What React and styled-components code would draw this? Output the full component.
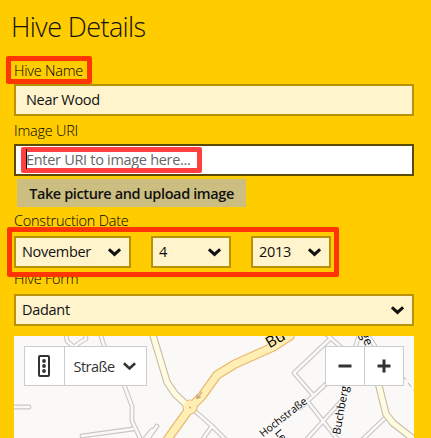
import React from "react";
import styled, { createGlobalStyle } from "styled-components";

const Global = createGlobalStyle`
  *{box-sizing:border-box}
  html,body{margin:0;background:#fc0;overflow:hidden}
`;
const Page = styled.main`
  position:relative;width:431px;height:438px;overflow:hidden;padding:0 17px 0 14px;
  background:#fc0;color:#111;font:350 14.5px "Open Sans","Noto Sans",sans-serif;
  display:flex;flex-direction:column;
`;
const Title = styled.h1`
  margin:9px 0 0 -3px;height:36px;font-size:27px;line-height:36px;font-weight:320;white-space:nowrap;
  letter-spacing:-0.6px;
`;
const Label = styled.label`
  display:block;flex:none;height:20px;line-height:20px;margin-top:${p => p.$top}px;font-size:14.5px;white-space:nowrap;
  color:#000;letter-spacing:-0.23px;
`;
const Field = styled.div`
  flex:none;height:32px;width:${p => p.$w || 400}px;margin-top:${p => p.$top || 0}px;
  padding:0 8px 0 ${p => p.$pl || 6}px;border:2px solid ${p => (p.$active ? "#5c4a08" : "#b8930a")};
  background:${p => (p.$active ? "#fff" : "#fff4cc")};color:${p => (p.$active ? "#666" : "#111")};
  display:flex;align-items:center;justify-content:space-between;font-size:14.5px;line-height:20px;font-weight:400;
  letter-spacing:-0.3px;white-space:nowrap;
`;
const DateRow = styled.div`display:flex;flex:none;gap:20px;margin-top:5px;`;
const Upload = styled.button`
  flex:none;margin:3px 0 0 3px;width:229px;height:28px;border:0;padding:1px 0 0;background:#ccbe80;color:#111;
  font:600 14.5px/27px "Open Sans","Noto Sans",sans-serif;letter-spacing:-0.39px;white-space:nowrap;
`;
const Highlight = styled.div`
  position:absolute;left:${p => p.$x}px;top:${p => p.$y}px;width:${p => p.$w}px;height:${p => p.$h}px;
  border:5px solid ${p => p.$c || "#ff3503"};border-radius:2px;
`;
const Caret = styled.i`
  position:absolute;left:26px;top:149px;width:1px;height:20px;background:#000;
`;
const MapBox = styled.section`
  position:relative;flex:none;width:400px;height:102px;margin-top:10px;padding:10px;background:#faf9f8;
  display:flex;justify-content:space-between;align-items:flex-start;overflow:hidden;
`;
const MapArt = styled.svg`position:absolute;inset:0;`;
const Group = styled.div`
  position:relative;display:flex;height:40px;border:1px solid #ccc;background:#fff;
`;
const Tool = styled.div`
  width:${p => p.$w}px;padding-right:${p => p.$pr || 0}px;
  display:flex;align-items:center;justify-content:center;gap:9px;color:#333;
  font-size:14.5px;font-weight:400;letter-spacing:-0.55px;& + &{border-left:1px solid #ccc}
`;
const MapText = styled.text`
  font:400 ${p => p.$size}px "Open Sans","Noto Sans",sans-serif;fill:#000;
  stroke:${p => p.$halo || "#faf9f8"};stroke-width:2px;paint-order:stroke;
`;

const Chevron = ({ s = 3 }) => (
  <svg width="13" height="10" viewBox="0 0 13 10"><path d="M.9 2.3 6.5 7.4 12.1 2.3" fill="none" stroke="currentColor" strokeWidth={s} /></svg>
);

const streets = [
  "M66 333 67 341 74 347 79 343 86 339 85 333",
  "M100 333 108 358 124 385 132 406 132 421 141 440",
  "M10 407H29",
  "M82 436 133 429",
  "M144 440 152 430",
  "M147 440 157 426",
  "M196 412 212 426 226 440M212 426 202 440",
  "M331 338 294 373 313 395M325 333 343 349",
  "M300 408 326 384M308 402 338 440",
  "M306 440 344 398",
  "M355 348 360 333M366 333 375 346",
  "M385 418 362 440",
];
const main = "M290 336 273 347 235 364 217 375 202 396 190 408 167 440";
const creams = ["M152 332 167 382 175 394 188 406", "M376 370 379 386 386 414 393 423 416 441"];

export default function App() {
  return (
    <Page>
      <Global />
      <Title>Hive Details</Title>
      <Label $top={16}>Hive Name</Label>
      <Field $top={3} $pl={10}>Near Wood</Field>
      <Label $top={5}>Image URI</Label>
      <Field $top={3} $pl={10} $active>Enter URI to image here...</Field>
      <Upload>Take picture and upload image</Upload>
      <Label $top={4}>Construction Date</Label>
      <DateRow>
        <Field $w={117}>November<Chevron /></Field>
        <Field $w={80}>4<Chevron /></Field>
        <Field $w={80}>2013<Chevron /></Field>
      </DateRow>
      <Label $top={1}>Hive Form</Label>
      <Field $top={5}>Dadant<Chevron /></Field>
      <MapBox>
        <MapArt width="400" height="102" viewBox="14 336 400 102" fill="none" strokeLinejoin="round" strokeLinecap="round">
          {streets.map(d => <path key={d} d={d} stroke="#c9c6c4" strokeWidth="4.8" />)}
          {streets.map(d => <path key={d} d={d} stroke="#faf9f8" strokeWidth="2.6" />)}
          {creams.map(d => <path key={d} d={d} stroke="#c5bba8" strokeWidth="7.5" />)}
          <path d={main} stroke="#e9b86f" strokeWidth="9.5" />
          <circle cx="190" cy="407" r="7" fill="#ffefb5" stroke="#e9b86f" strokeWidth="1.2" />
          {creams.map(d => <path key={d} d={d} stroke="#fffbe0" strokeWidth="5.3" />)}
          <path d={main} stroke="#ffefb5" strokeWidth="7" />
          <circle cx="190" cy="407" r="6.4" fill="#ffefb5" />
          <circle cx="190" cy="407.500" r="1" fill="#d9a566" />
          <path d="M202 392 197.500 398M197 394.500V398.500L200.500 397" stroke="#c29a72" strokeWidth="1.1" />
          <path d="M403 376 418 396" stroke="#aaa" strokeDasharray="4 5" />
          <MapText $size={15.5} $halo="#ffefb5" transform="translate(269.500 348.500) rotate(-30)">Bu</MapText>
          <MapText $size={10.5} transform="translate(274.500 433) rotate(50)">Le</MapText>
          <MapText $size={10.5} transform="translate(263 437.500) rotate(-38)">Hochstraße</MapText>
          <MapText $size={11} transform="translate(340 435) rotate(-80)">Buchbergs</MapText>
          <MapText $size={12.5} transform="translate(360 334) rotate(66)">ge</MapText>
        </MapArt>
        <Group>
          <Tool $w={39} $pr={1}>
            <svg width="12" height="22" viewBox="0 0 12 22"><rect x="1" y="1" width="10" height="20" rx="1" fill="none" stroke="#333" strokeWidth="2" /><g fill="#333"><circle cx="6" cy="6" r="1.9" /><circle cx="6" cy="11" r="1.9" /><circle cx="6" cy="16" r="1.9" /></g></svg>
          </Tool>
          <Tool $w={82} $pr={1}>Straße<Chevron s={2.6} /></Tool>
        </Group>
        <Group>
          <Tool $w={38}><svg width="14" height="14"><path d="M.5 7h13" stroke="#333" strokeWidth="3" /></svg></Tool>
          <Tool $w={39}><svg width="14" height="14"><path d="M.5 7h13M7 .5v13" stroke="#333" strokeWidth="3" /></svg></Tool>
        </Group>
      </MapBox>
      <Highlight $x={6} $y={56} $w={86} $h={28} />
      <Highlight $x={21} $y={147} $w={181} $h={26} $c="#ff4040" />
      <Highlight $x={7} $y={227} $w={332} $h={50} />
      <Caret />
    </Page>
  );
}
